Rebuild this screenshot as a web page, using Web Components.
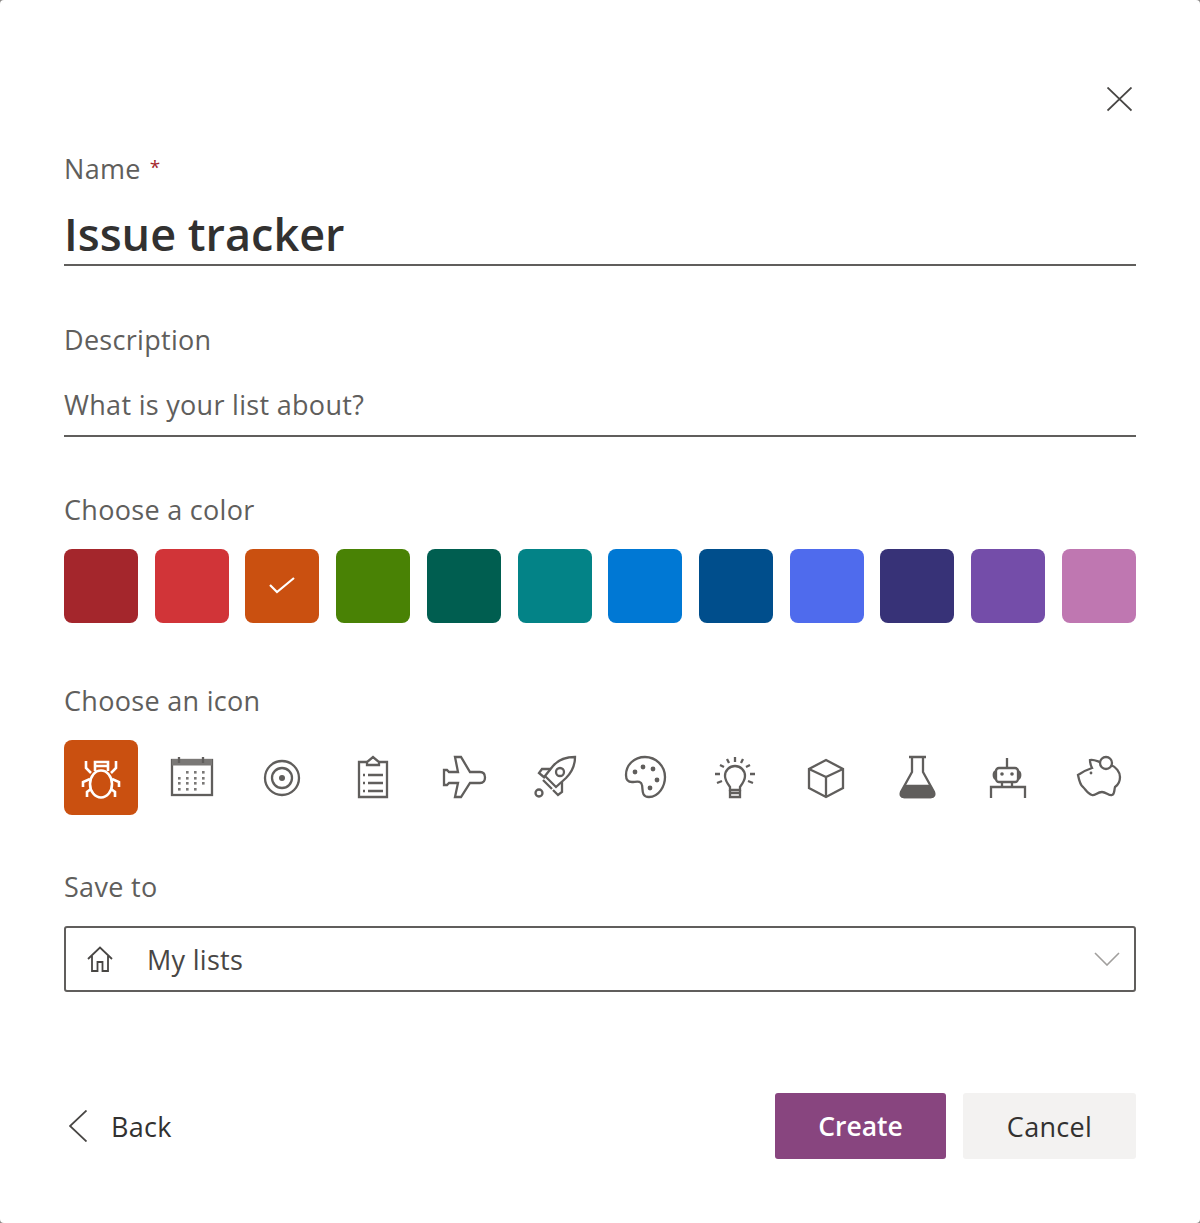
<!DOCTYPE html>
<html lang="en">
<head>
<meta charset="utf-8">
<title>Issue tracker</title>
<style>
html, body { margin: 0; background: #8a8886; }
body { font-family: "Open Sans", "Noto Sans", sans-serif; }
</style>
</head>
<body>
<list-dialog>
  <form-field label="Name" required gap="0">
    <text-line size="title">Issue tracker</text-line>
  </form-field>
  <form-field label="Description" gap="56">
    <text-line>What is your list about?</text-line>
  </form-field>
  <form-field label="Choose a color" gap="55">
    <tile-row>
      <pick-tile color="#a4262c"></pick-tile>
      <pick-tile color="#d13438"></pick-tile>
      <pick-tile color="#ca5010" selected></pick-tile>
      <pick-tile color="#498205"></pick-tile>
      <pick-tile color="#005e50"></pick-tile>
      <pick-tile color="#038387"></pick-tile>
      <pick-tile color="#0078d4"></pick-tile>
      <pick-tile color="#004e8c"></pick-tile>
      <pick-tile color="#4f6bed"></pick-tile>
      <pick-tile color="#373277"></pick-tile>
      <pick-tile color="#744da9"></pick-tile>
      <pick-tile color="#bf77b1"></pick-tile>
    </tile-row>
  </form-field>
  <form-field label="Choose an icon" gap="60">
    <tile-row>
      <pick-tile color="#ca5010" icon="bug"></pick-tile>
      <pick-tile icon="calendar"></pick-tile>
      <pick-tile icon="target"></pick-tile>
      <pick-tile icon="clipboard"></pick-tile>
      <pick-tile icon="plane"></pick-tile>
      <pick-tile icon="rocket"></pick-tile>
      <pick-tile icon="palette"></pick-tile>
      <pick-tile icon="bulb"></pick-tile>
      <pick-tile icon="cube"></pick-tile>
      <pick-tile icon="flask"></pick-tile>
      <pick-tile icon="robot"></pick-tile>
      <pick-tile icon="piggy"></pick-tile>
    </tile-row>
  </form-field>
  <form-field label="Save to" gap="54">
    <select-box>My lists</select-box>
  </form-field>
  <dialog-footer>
    <action-button primary>Create</action-button>
    <action-button>Cancel</action-button>
  </dialog-footer>
</list-dialog>

<script>
const calendarDots = [
  [19, 18], [27, 18], [35, 18],
  [11, 24], [19, 24], [27, 24], [35, 24],
  [11, 29], [19, 29], [27, 29], [35, 29],
  [11, 35], [19, 35], [27, 35]
].map(d => `<rect x="${d[0] - 1}" y="${d[1] - 1}" width="2.6" height="2.6" fill="#7a7876" stroke="none"/>`).join('');

// all icons are drawn in a 48 box, one unit is one screen pixel
const icons = {
  bug: `<g stroke-width="2.600">
    <ellipse cx="24" cy="30" rx="11" ry="13.500"/>
    <path d="M18 17 V8 H31 V17 M18 12 H31"/>
    <path d="M9 7 V14 L14 19 M39 7 V14 L34 19"/>
    <path d="M13 25 L6 28 V33 M35 25 L42 28 V33"/>
    <path d="M10 43 V38 L14 35 M38 43 V38 L34 35"/></g>`,
  calendar: `<rect x="4" y="6" width="40" height="35"/>
    <rect x="4" y="5" width="40" height="6.500" fill="#7a7876" stroke="none"/>
    <path d="M11 3 V9 M35 3 V9"/>${calendarDots}`,
  target: `<circle cx="24" cy="24" r="17"/><circle cx="24" cy="24" r="10"/>
    <circle cx="24" cy="24" r="3" fill="#605e5c" stroke="none"/>`,
  clipboard: `<path d="M18 8 H10 V43 H38 V8 H30"/>
    <path d="M18 11 V8 L24 3 L30 8 V11 Z"/>
    <path stroke-width="2.600" d="M14 21 H16 M19 21 H34 M14 29 H16 M19 29 H34 M14 37 H16 M19 37 H34"/>`,
  plane: `<path d="M4 16 H7 L9 18 H18 L15 3 H21 L30 18 H40 C43 18 45 20 45 23.500 C45 27 43 29 40 29 H30 L21 43 H15 L18 29 H9 L7 31 H4 Z"/>`,
  rocket: `<path d="M44 3 C34 3 27 6 22 12 L14 22 L25 33 L35 24 C41 18 44 12 44 3 Z"/>
    <circle cx="29" cy="18" r="4"/>
    <path d="M20 15 H11 L8 19 L14 24 M31 28 V38 L27 41 L22 36"/>
    <path d="M12 26 L21 35"/>
    <circle cx="8" cy="39" r="3.500"/>`,
  palette: `<path d="M24 3 C13 3 5 11 5 21 C5 25 7 28 11 28 C15 28 20 26 21 31 C22 35 20 43 28 43 C38 43 44 32 44 23 C44 12 35 3 24 3 Z"/>
    <g fill="#605e5c" stroke="none"><circle cx="14" cy="18" r="2.400"/><circle cx="22" cy="13" r="2.400"/><circle cx="32" cy="15" r="2.400"/><circle cx="36" cy="26" r="2.400"/><circle cx="29" cy="34" r="2.400"/></g>`,
  bulb: `<path d="M18 36 V33 C15 29 13 26 13 22 A10 10 0 0 1 33 22 C33 26 31 29 28 33 V36 Z"/>
    <path d="M18 36 V43 H28 V36 M18 39 H28"/>
    <path d="M23 3 V8 M15 5 L17 9 M31 5 L29 9 M8 11 L12 13 M38 11 L34 13 M3 20 H8 M38 20 H43 M5 29 L10 27 M41 29 L36 27"/>`,
  cube: `<path d="M23 6 L40 15 V34 L23 43 L6 34 V15 Z"/>
    <path d="M6 15 L23 23 L40 15 M23 23 V43"/>`,
  flask: `<path d="M16 3 H33 M19 3 V18 L8 38 C7 41 8 43 11 43 H38 C41 43 42 41 41 38 L30 18 V3"/>
    <path d="M13 32 H36 L40 39 C41 41 40 43 38 43 H11 C9 43 8 41 9 39 Z" fill="#605e5c"/>`,
  robot: `<rect x="12" y="14" width="22" height="14" rx="3"/>
    <path d="M23 4 V14 M18 28 V33 M28 28 V33 M7 44 V33 H41 V44"/>
    <path d="M12 17 C9 18 9 24 12 25 M34 17 C37 18 37 24 34 25"/>
    <g fill="#605e5c" stroke="none"><circle cx="18" cy="20" r="1.800"/><circle cx="28" cy="20" r="1.800"/></g>`,
  piggy: `<path d="M25 8 C22 7 18 5 15 6 C15 10 16 12 17 14 C11 16 7 18 3 21 C4 26 5 31 8 33 C11 36 13 40 17 41 C20 42 22 38 27 38 C31 38 34 42 37 41 C40 40 39 36 40 33 C43 31 45 27 45 23 C45 18 41 13 36 11"/>
    <circle cx="31" cy="9" r="6"/>
    <circle cx="16" cy="19" r="1.400" fill="#605e5c" stroke="none"/>`
};

customElements.define('list-dialog', class extends HTMLElement {
  constructor() {
    super();
    this.attachShadow({ mode: 'open' }).innerHTML = `
<style>
:host {
  display: block;
  box-sizing: border-box;
  height: 1223px;
  padding: 87px 64px 0;
  background: #fff;
  border-radius: 4px;
  color: #605e5c;
  font-size: 27px;
  letter-spacing: .3px;
}
.close { display: flex; justify-content: flex-end; height: 62px; padding-right: 4px; }
svg { display: block; width: 25px; height: 25px; }
</style>
<div class="close">
  <svg viewBox="0 0 25 25" fill="none" stroke="#484644" stroke-width="1.800"><path d="M.5 .5 L24.500 23.500 M24.500 .5 L.5 23.500"/></svg>
</div>
<slot></slot>`;
  }
});

customElements.define('form-field', class extends HTMLElement {
  constructor() {
    super();
    const star = this.hasAttribute('required') ? '<span class="star">*</span>' : '';
    this.attachShadow({ mode: 'open' }).innerHTML = `
<style>
:host { display: block; margin-top: ${this.getAttribute('gap') || 0}px; }
.label { height: 36px; line-height: 36px; color: #605e5c; }
.star { margin-left: 9px; color: #a4262c; font-size: 19px; vertical-align: 5px; }
</style>
<div class="label">${this.getAttribute('label')}${star}</div>
<slot></slot>`;
  }
});

customElements.define('text-line', class extends HTMLElement {
  constructor() {
    super();
    this.attachShadow({ mode: 'open' }).innerHTML = `
<style>
:host {
  display: flex;
  align-items: center;
  box-sizing: border-box;
  height: 79px;
  padding-top: 15px;
  border-bottom: 2px solid #605e5c;
  color: #605e5c;
}
:host([size="title"]) {
  height: 81px;
  padding-top: 17px;
  font-size: 45px;
  font-weight: 600;
  letter-spacing: 0;
  color: #323130;
}
</style>
<slot></slot>`;
  }
});

customElements.define('tile-row', class extends HTMLElement {
  constructor() {
    super();
    this.attachShadow({ mode: 'open' }).innerHTML = `
<style>
:host {
  display: grid;
  grid-template-columns: repeat(12, 74px);
  justify-content: space-between;
  margin-top: 21px;
}
</style>
<slot></slot>`;
  }
});

customElements.define('pick-tile', class extends HTMLElement {
  constructor() {
    super();
    const name = this.getAttribute('icon');
    const isIcon = name !== null;
    const filled = this.getAttribute('color');
    let inner = '';
    if (isIcon) {
      const stroke = filled ? '#fff' : '#605e5c';
      inner = `<svg viewBox="0 0 48 48" fill="none" stroke="${stroke}" stroke-width="2.300">${icons[name]}</svg>`;
    } else if (this.hasAttribute('selected')) {
      inner = `<svg class="check" viewBox="0 0 26 18" fill="none" stroke="#fff" stroke-width="2.200"><path d="M1 8 L8 15 L25 1"/></svg>`;
    }
    this.attachShadow({ mode: 'open' }).innerHTML = `
<style>
:host {
  display: flex;
  align-items: center;
  justify-content: center;
  height: ${isIcon ? 75 : 74}px;
  border-radius: 8px;
  background: ${filled || 'transparent'};
}
svg { display: block; width: 48px; height: 48px; }
svg.check { width: 26px; height: 18px; }
</style>
${inner}`;
  }
});

customElements.define('select-box', class extends HTMLElement {
  constructor() {
    super();
    this.attachShadow({ mode: 'open' }).innerHTML = `
<style>
:host {
  display: flex;
  align-items: center;
  box-sizing: border-box;
  height: 66px;
  margin-top: 21px;
  padding: 0 14px 0 21px;
  border: 2px solid #605e5c;
  border-radius: 3px;
  color: #484644;
}
.text { flex: 1; margin-left: 34px; }
svg { display: block; }
</style>
<svg width="26" height="26" viewBox="0 0 26 26" fill="none" stroke="#484644" stroke-width="1.800"><path d="M1 13 L13 1.500 L25 13 M5 10 V25 H10.500 V16 H15.500 V25 H21 V10"/></svg>
<span class="text"><slot></slot></span>
<svg width="26" height="14" viewBox="0 0 26 14" fill="none" stroke="#a19f9d" stroke-width="1.600"><path d="M1 1 L13 13 L25 1"/></svg>`;
  }
});

customElements.define('dialog-footer', class extends HTMLElement {
  constructor() {
    super();
    this.attachShadow({ mode: 'open' }).innerHTML = `
<style>
:host {
  display: flex;
  align-items: center;
  margin-top: 101px;
  height: 66px;
  gap: 17px;
}
.back { display: flex; align-items: center; margin-right: auto; padding-left: 5px; color: #323130; }
.back svg { display: block; margin-right: 24px; }
</style>
<div class="back">
  <svg width="18" height="32" viewBox="0 0 18 32" fill="none" stroke="#484644" stroke-width="1.800"><path d="M17.500 .5 L1 16 L17.500 31.500"/></svg>
  <span>Back</span>
</div>
<slot></slot>`;
  }
});

customElements.define('action-button', class extends HTMLElement {
  constructor() {
    super();
    this.attachShadow({ mode: 'open' }).innerHTML = `
<style>
:host {
  display: flex;
  align-items: center;
  justify-content: center;
  box-sizing: border-box;
  width: 173px;
  height: 66px;
  border-radius: 3px;
  background: #f3f2f1;
  color: #323130;
}
:host([primary]) {
  width: 171px;
  background: #88457f;
  color: #fff;
  font-weight: 600;
  letter-spacing: 0;
  font-size: 26.500px;
}
</style>
<slot></slot>`;
  }
});
</script>
</body>
</html>
